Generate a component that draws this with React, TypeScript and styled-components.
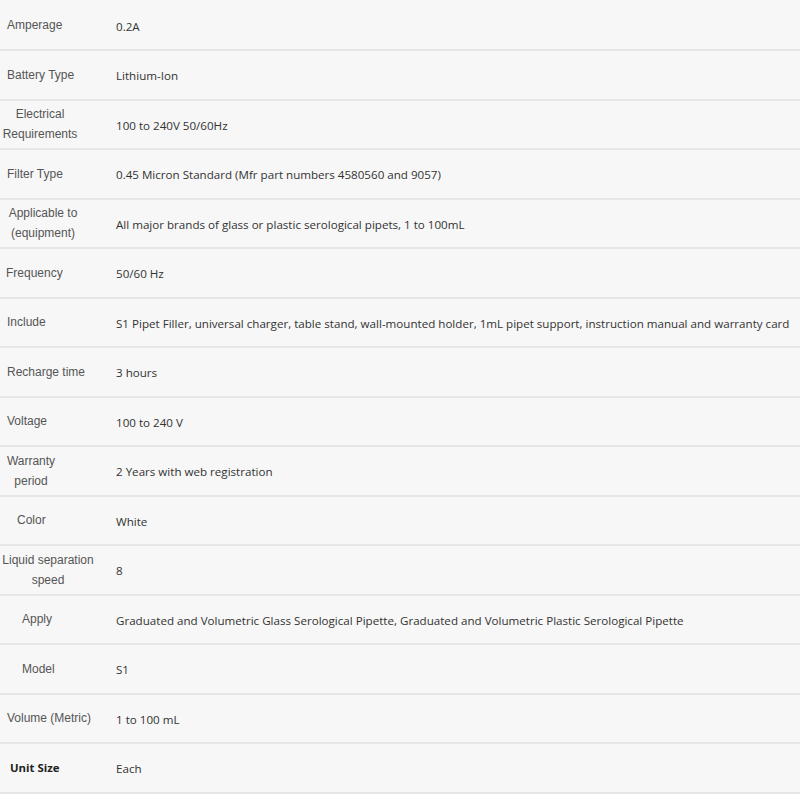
import styled, { createGlobalStyle } from "styled-components"

const GlobalStyle = createGlobalStyle`
    html, body {
        margin: 0;
        padding: 0;
        background: #ffffff;
    }
`

type Spec = {
    label: string[]
    value: string
    pad?: number
    center?: number
    strong?: boolean
}

const specs: Spec[] = [
    { label: ["Amperage"], value: "0.2A", pad: 7 },
    { label: ["Battery Type"], value: "Lithium-Ion", pad: 7 },
    { label: ["Electrical", "Requirements"], value: "100 to 240V 50/60Hz", center: 40 },
    { label: ["Filter Type"], value: "0.45 Micron Standard (Mfr part numbers 4580560 and 9057)", pad: 7 },
    { label: ["Applicable to", "(equipment)"], value: "All major brands of glass or plastic serological pipets, 1 to 100mL", center: 43 },
    { label: ["Frequency"], value: "50/60 Hz", pad: 6 },
    { label: ["Include"], value: "S1 Pipet Filler, universal charger, table stand, wall-mounted holder, 1mL pipet support, instruction manual and warranty card", pad: 7 },
    { label: ["Recharge time"], value: "3 hours", pad: 7 },
    { label: ["Voltage"], value: "100 to 240 V", pad: 7 },
    { label: ["Warranty", "period"], value: "2 Years with web registration", center: 31 },
    { label: ["Color"], value: "White", pad: 17 },
    { label: ["Liquid separation", "speed"], value: "8", center: 48 },
    { label: ["Apply"], value: "Graduated and Volumetric Glass Serological Pipette, Graduated and Volumetric Plastic Serological Pipette", pad: 22 },
    { label: ["Model"], value: "S1", pad: 22 },
    { label: ["Volume (Metric)"], value: "1 to 100 mL", pad: 7 },
    { label: ["Unit Size"], value: "Each", pad: 10, strong: true },
]

export default function App() {
    return <>
        <GlobalStyle />
        <SpecTable>
            {specs.map((s) => (
                <Row key={s.label.join(" ")}>
                    <Label $pad={s.pad} $center={s.center} $strong={s.strong}>
                        {s.label.map((line) => <span key={line}>{line}</span>)}
                    </Label>
                    <Value>{s.value}</Value>
                </Row>
            ))}
        </SpecTable>
    </>
}

const SpecTable = styled.div`
    display: flex;
    flex-direction: column;
    width: 800px;
    padding-top: 1.5px;
    background: #f7f7f7;
`

const Row = styled.div`
    display: grid;
    grid-template-columns: 116px 1fr;
    height: 49.5px;
    box-sizing: border-box;
    border-bottom: 2px solid #e6e6e6;
`

const Label = styled.div<{ $pad?: number; $center?: number; $strong?: boolean }>`
    display: flex;
    flex-direction: column;
    justify-content: center;
    align-items: ${(p) => (p.$center ? "center" : "flex-start")};
    width: ${(p) => (p.$center ? `${p.$center * 2}px` : "auto")};
    padding-left: ${(p) => (p.$center ? 0 : p.$pad ?? 0)}px;
    box-sizing: border-box;
    font-family: ${(p) => (p.$strong ? `"Open Sans", "Noto Sans", sans-serif` : `"Liberation Sans", Arial, sans-serif`)};
    font-size: ${(p) => (p.$strong ? 11.4 : 12)}px;
    font-weight: ${(p) => (p.$strong ? 700 : 400)};
    line-height: 20px;
    color: ${(p) => (p.$strong ? "#222" : "#555")};
    white-space: nowrap;
`

const Value = styled.div`
    display: flex;
    align-items: center;
    padding-top: 2px;
    font-family: "Open Sans", "Noto Sans", sans-serif;
    font-size: 11.6px;
    color: #333;
    white-space: nowrap;
`
